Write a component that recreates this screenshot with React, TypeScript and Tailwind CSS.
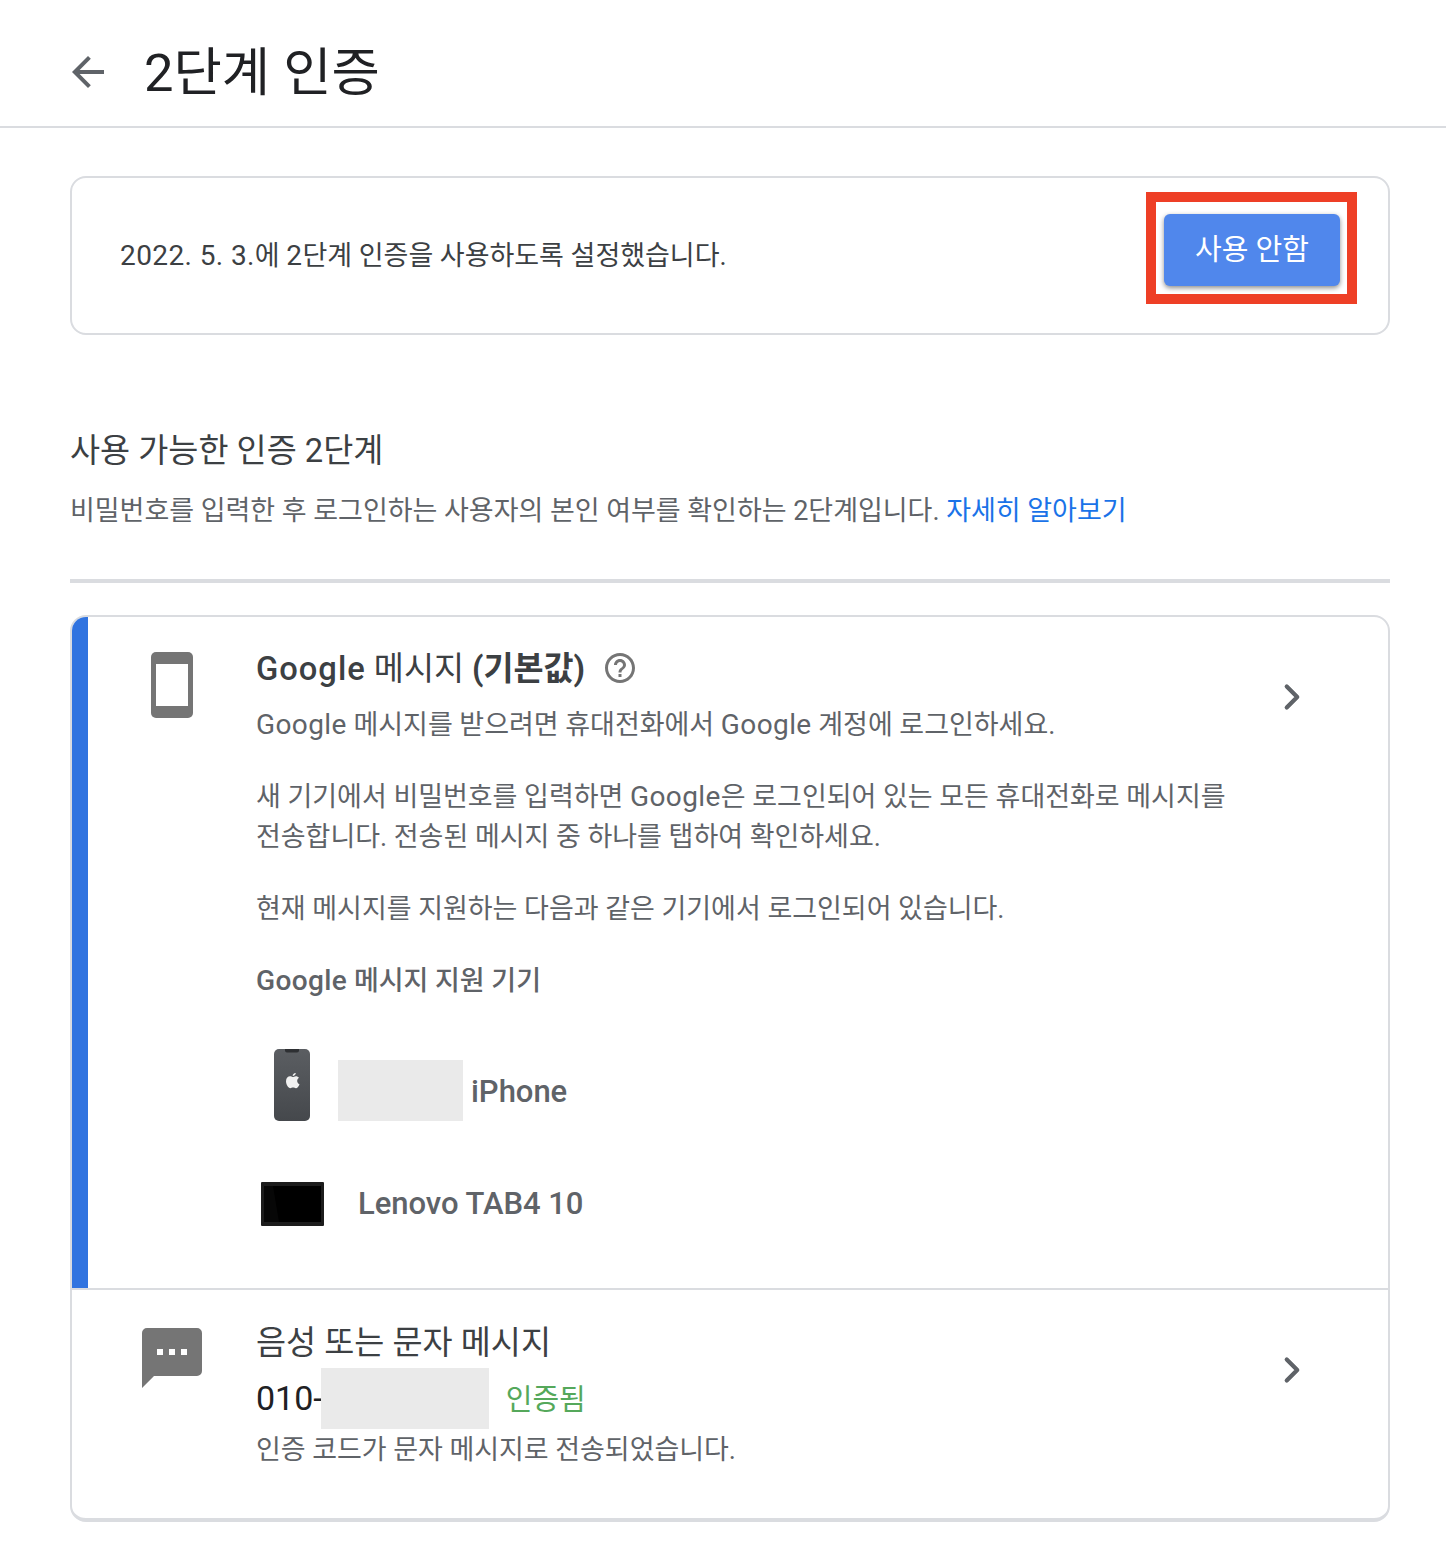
import { ChevronRight } from "lucide-react";
import type { ReactNode } from "react";

// latin runs sit a bit wider than the hangul around them
function L({ children }: { children: ReactNode }) {
  return <span className="text-[28px] tracking-[0.4px]">{children}</span>;
}

function BackIcon() {
  return (
    <svg width="48" height="48" viewBox="0 0 24 24" fill="#5f6368" className="-mt-[2px] shrink-0">
      <path d="M20 11H7.830l5.590-5.590L12 4l-8 8 8 8 1.410-1.410L7.830 13H20v-2z" />
    </svg>
  );
}

function PhoneIcon() {
  return (
    <svg width="42" height="66" viewBox="0 0 42 66">
      <rect width="42" height="66" rx="5" fill="#757575" />
      <rect x="5" y="12" width="32" height="42" fill="#fff" />
    </svg>
  );
}

function HelpIcon() {
  return (
    <svg width="36" height="36" viewBox="0 0 24 24" fill="#757575">
      <path d="M11 18h2v-2h-2v2zm1-16C6.480 2 2 6.480 2 12s4.480 10 10 10 10-4.480 10-10S17.520 2 12 2zm0 18c-4.410 0-8-3.590-8-8s3.590-8 8-8 8 3.590 8 8-3.590 8-8 8zm0-14c-2.210 0-4 1.790-4 4h2c0-1.100.9-2 2-2s2 .9 2 2c0 2-3 1.750-3 5h2c0-2.250 3-2.500 3-5 0-2.210-1.790-4-4-4z" />
    </svg>
  );
}

function IphoneIcon() {
  return (
    <svg width="36" height="72" viewBox="0 0 36 72">
      <defs>
        <linearGradient id="body" x1="0" y1="0" x2="0" y2="1">
          <stop offset="0" stopColor="#5b5e62" />
          <stop offset="1" stopColor="#45484c" />
        </linearGradient>
      </defs>
      <rect width="36" height="72" rx="5" fill="url(#body)" />
      <path d="M11 0h14v1.500a2 2 0 0 1-2 2H13a2 2 0 0 1-2-2z" fill="#2e3033" />
      <path
        d="M21.800 24c-.1 1.700-1.500 3-3.100 2.900-.1-1.600 1.400-3.100 3.100-2.900zM18.600 28c.9 0 1.900-.8 3.200-.8 1.300 0 2.500.6 3.200 1.600-2.700 1.600-2.200 5.300.5 6.400-.7 1.800-2.100 4-3.600 4-1 0-1.600-.6-2.800-.6s-1.900.6-2.800.6c-1.800 0-4.300-3.700-4.300-7 0-3.300 2.100-4.900 4-4.900 1.100 0 2 .7 2.600.7z"
        fill="#f1f1f1"
      />
    </svg>
  );
}

function TabletIcon() {
  return (
    <svg width="63" height="44" viewBox="0 0 63 44">
      <rect width="63" height="44" rx="1" fill="#1c1c1c" />
      <rect x="3" y="4" width="57" height="36" fill="#000" />
      <path d="M3 4h9l6 36H3z" fill="#070707" />
    </svg>
  );
}

function MessageIcon() {
  return (
    <svg width="60" height="60" viewBox="0 0 60 60">
      <path d="M5 0h50a5 5 0 0 1 5 5v38a5 5 0 0 1-5 5H12L0 60V5a5 5 0 0 1 5-5z" fill="#757575" />
      <rect x="15" y="21" width="6" height="6" fill="#fff" />
      <rect x="27" y="21" width="6" height="6" fill="#fff" />
      <rect x="39" y="21" width="6" height="6" fill="#fff" />
    </svg>
  );
}

export default function App() {
  return (
    <div
      className="h-[1544px] bg-white overflow-hidden text-[#5f6368]"
      style={{ fontFamily: '"Roboto", "Noto Sans CJK KR", sans-serif' }}
    >
      {/* Header */}
      <header className="h-[128px] border-b-2 border-[#dadce0] flex items-center pl-[64px] pt-[20px]">
        <BackIcon />
        <h1 className="ml-[32px] text-[52.5px] leading-[64px] text-[#202124]">2단계 인증</h1>
      </header>

      <main className="px-[70px] pr-[56px]">
        {/* Status card */}
        <section className="relative mt-[48px] h-[159px] border-2 border-[#dadce0] rounded-[16px] flex items-center justify-between pl-[48px] pr-[48px]">
          <p className="text-[27px] leading-[40px] text-[#3c4043] tracking-[-0.03px]">
            <L>2022. 5. 3.</L>에 <L>2</L>단계 인증을 사용하도록 설정했습니다.
          </p>
          <button
            type="button"
            className="w-[176px] h-[72px] -mt-[12px] pt-[2px] rounded-[6px] bg-[#5087ec] text-white text-[29px] shadow-[0_2px_5px_rgba(0,0,0,0.45)]"
          >
            사용 안함
          </button>
          {/* annotation box */}
          <div className="absolute left-[1074px] top-[14px] w-[211px] h-[112px] border-[10px] border-[#ee3f26]" />
        </section>

        {/* Intro */}
        <h2 className="mt-[96px] text-[32.7px] leading-[40px] text-[#3c4043]">사용 가능한 인증 2단계</h2>
        <p className="mt-[20px] text-[27px] leading-[40px] text-[#5f6368] tracking-[-0.03px]">
          비밀번호를 입력한 후 로그인하는 사용자의 본인 여부를 확인하는 2단계입니다.{" "}
          <span className="text-[#1a73e8]">자세히 알아보기</span>
        </p>
        <div className="mt-[48px] h-[4px] bg-[#dadce0]" />

        {/* Methods */}
        <section className="mt-[32px] h-[907px] border-2 border-b-[4px] border-[#dadce0] rounded-[16px] overflow-hidden">
          <div className="h-[673px] border-b-2 border-[#dadce0] flex">
            <div className="w-[16px] bg-[#3174e0] shrink-0" />
            <div className="w-[168px] shrink-0 pt-[35px] pl-[63px]">
              <PhoneIcon />
            </div>
            <div className="w-[990px] pt-[29px] tracking-[-0.03px]">
              <div className="flex items-center gap-[17px] h-[44px]">
                <h3 className="mt-[2px] text-[32.7px] leading-[44px] font-medium text-[#3c4043]">
                  <span className="tracking-[1px]">Google</span> <span className="font-normal">메시지</span>{" "}
                  <span className="font-bold">(기본값)</span>
                </h3>
                <HelpIcon />
              </div>
              <p className="mt-[15px] text-[27px] leading-[40px]">
                <L>Google</L> 메시지를 받으려면 휴대전화에서 <L>Google</L> 계정에 로그인하세요.
              </p>
              <p className="mt-[32px] text-[27px] leading-[40px]">
                새 기기에서 비밀번호를 입력하면 <L>Google</L>은 로그인되어 있는 모든 휴대전화로 메시지를 전송합니다. 전송된 메시지 중 하나를 탭하여 확인하세요.
              </p>
              <p className="mt-[32px] text-[27px] leading-[40px]">
                현재 메시지를 지원하는 다음과 같은 기기에서 로그인되어 있습니다.
              </p>
              <p className="mt-[32px] text-[27px] leading-[40px] font-medium">
                <L>Google</L> 메시지 지원 기기
              </p>
              <div className="mt-[48px] flex items-end h-[72px] pl-[18px]">
                <IphoneIcon />
                <div className="ml-[28px] w-[125px] h-[61px] bg-[#eaeaea]" />
                <span className="ml-[8px] -mb-[2px] text-[31px] leading-[62px] font-medium">iPhone</span>
              </div>
              <div className="mt-[61px] flex items-center h-[44px] pl-[5px]">
                <TabletIcon />
                <span className="ml-[34px] text-[31px] font-medium">Lenovo TAB4 10</span>
              </div>
            </div>
            <div className="pt-[59px] pl-[25px]">
              <ChevronRight className="w-[42px] h-[42px] text-[#5f6368]" strokeWidth={2.4} />
            </div>
          </div>

          <div className="flex">
            <div className="w-[184px] shrink-0 pt-[38px] pl-[70px]">
              <MessageIcon />
            </div>
            <div className="w-[990px] pt-[30px]">
              <h3 className="mt-[1px] -mb-[1px] text-[32.7px] leading-[44px] text-[#3c4043]">음성 또는 문자 메시지</h3>
              <div className="flex items-center h-[61px] mt-[4px]">
                <span className="text-[34px] text-[#202124]">010-</span>
                <div className="w-[168px] h-[61px] bg-[#eaeaea] -ml-[2px]" />
                <span className="ml-[17px] mt-[4px] text-[29px] text-[#55a85b]">인증됨</span>
              </div>
              <p className="mt-[1px] text-[27px] leading-[40px] tracking-[-0.05px]">인증 코드가 문자 메시지로 전송되었습니다.</p>
            </div>
            <div className="pt-[59px] pl-[25px]">
              <ChevronRight className="w-[42px] h-[42px] text-[#5f6368]" strokeWidth={2.4} />
            </div>
          </div>
        </section>
      </main>
    </div>
  );
}
